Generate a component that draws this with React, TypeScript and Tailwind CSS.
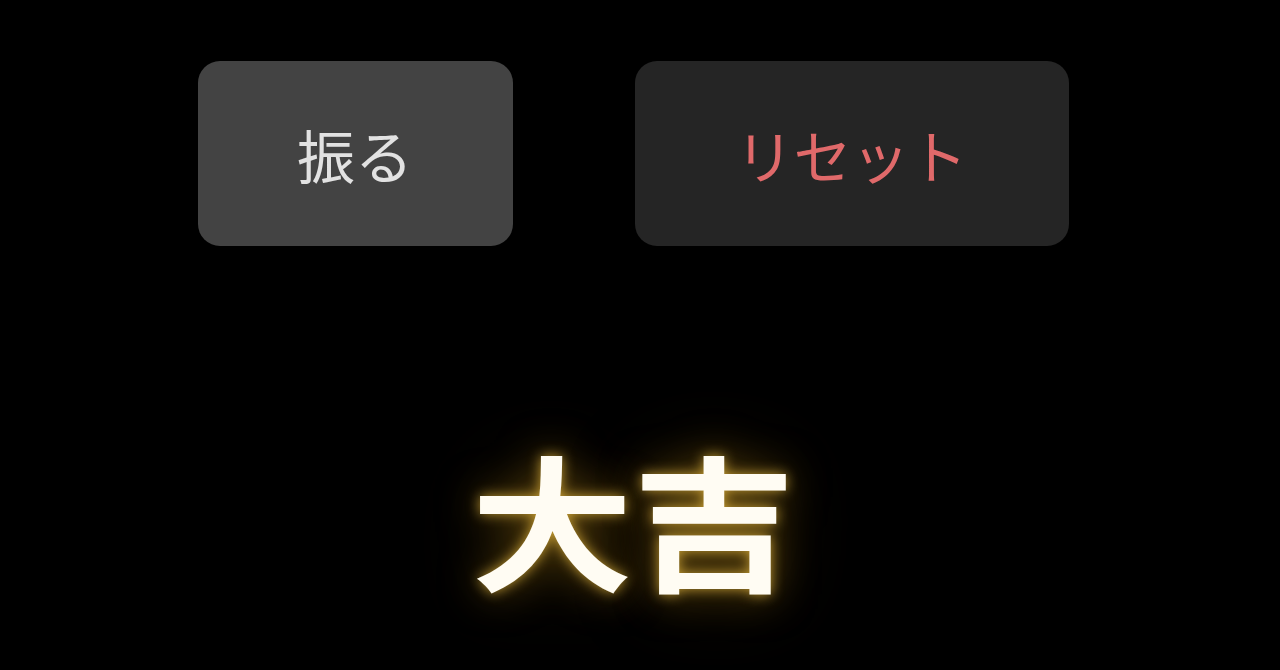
export default function App() {
  const font = { fontFamily: '"Noto Sans CJK JP", "Noto Sans", sans-serif' }
  return (
    <div className="w-[1280px] h-[670px] bg-black overflow-hidden flex flex-col items-center pr-[14px]" style={font}>
      <div className="flex gap-[122px] mt-[61px]">
        <button className="w-[315px] h-[185px] rounded-[22px] bg-[#434343] text-[#e2e2e2] text-[58px] leading-none">
          振る
        </button>
        <button className="w-[434px] h-[185px] rounded-[22px] bg-[#252525] text-[#e0696a] text-[58px] leading-none">
          リセット
        </button>
      </div>
      <div
        className="mt-[190px] text-[162px] leading-none font-bold text-[#fffcf3] scale-y-[0.9] [text-shadow:0_0_14px_rgba(255,205,70,0.7),0_0_45px_rgba(190,140,30,0.5),0_0_90px_rgba(120,85,10,0.35)]"
      >
        大吉
      </div>
    </div>
  )
}
